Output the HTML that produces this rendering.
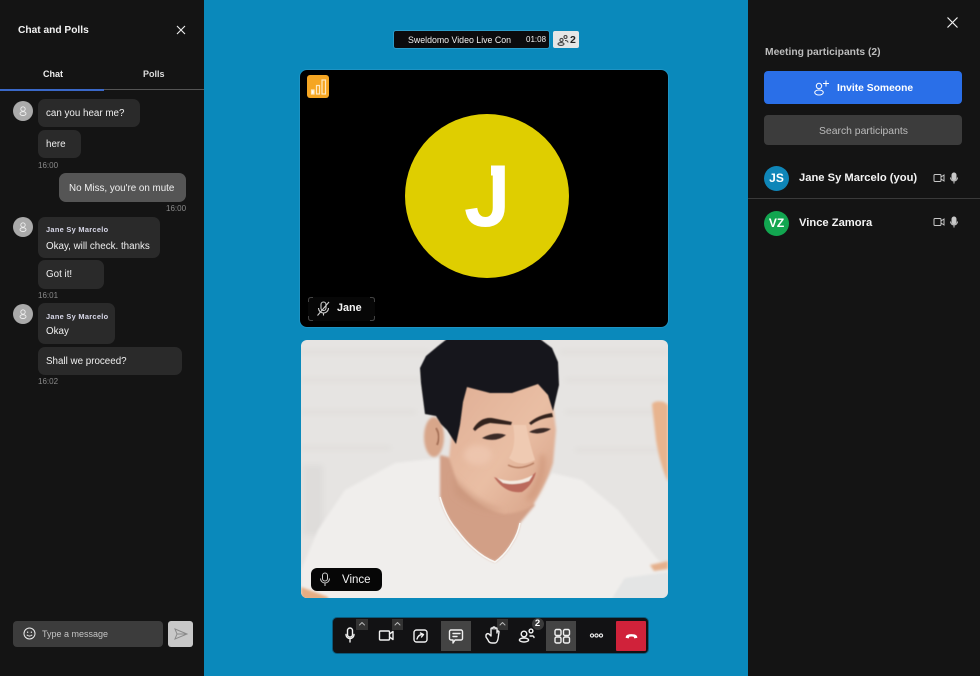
<!DOCTYPE html>
<html><head><meta charset="utf-8">
<style>
*{box-sizing:border-box}
html,body{margin:0;padding:0}
body{width:980px;height:676px;position:relative;overflow:hidden;background:#0a89bb;font-family:"Liberation Sans",sans-serif;color:#fff}
.a{position:absolute}
.t{position:absolute;white-space:nowrap;line-height:14px}
.b{position:absolute;background:#2a2a2a;border-radius:7px}
.tm{position:absolute;font-size:8px;color:#8a8a8a;line-height:10px}
.av{position:absolute;left:13px;width:20px;height:20px;border-radius:50%;background:#aaa}
svg{position:absolute;overflow:visible}
.m{font-size:9.8px;color:#f0f0f0}
.n{font-size:7.4px;font-weight:bold;color:#d8d8e8;letter-spacing:.3px}
</style></head>
<body>
<!-- left panel -->
<div class="a" style="left:0;top:0;width:204px;height:676px;background:#141414"></div>
<div class="t" style="left:18px;top:24px;font-size:10.2px;font-weight:bold;color:#f2f2f2">Chat and Polls</div>
<svg style="left:176px;top:25px" width="10" height="10" fill="none" stroke="#eee" stroke-width="1.1"><path d="M1 1l8 8M9 1l-8 8"/></svg>
<div class="t" style="left:43px;top:67px;font-size:9px;font-weight:bold;color:#eee">Chat</div>
<div class="t" style="left:143px;top:67px;font-size:9px;font-weight:bold;color:#ddd">Polls</div>
<div class="a" style="left:0;top:89px;width:204px;height:1px;background:#555"></div>
<div class="a" style="left:0;top:89px;width:104px;height:1.5px;background:#3a68c8"></div>

<div class="av" style="top:101px"></div>
<svg style="left:13px;top:101px" width="20" height="20" fill="none" stroke="#eee" stroke-width=".9"><circle cx="10" cy="8" r="2.2"/><ellipse cx="10" cy="12.6" rx="3" ry="1.9"/></svg>
<div class="b" style="left:38px;top:99px;width:102px;height:28px"></div>
<div class="t m" style="left:46px;top:107px">can you hear me?</div>
<div class="b" style="left:38px;top:130px;width:43px;height:28px"></div>
<div class="t m" style="left:46px;top:138px">here</div>
<div class="tm" style="left:38px;top:161px">16:00</div>
<div class="b" style="left:59px;top:173px;width:127px;height:29px;background:#555"></div>
<div class="t m" style="left:69px;top:182px">No Miss, you're on mute</div>
<div class="tm" style="left:166px;top:204px">16:00</div>

<div class="av" style="top:217px"></div>
<svg style="left:13px;top:217px" width="20" height="20" fill="none" stroke="#eee" stroke-width=".9"><circle cx="10" cy="8" r="2.2"/><ellipse cx="10" cy="12.6" rx="3" ry="1.9"/></svg>
<div class="b" style="left:38px;top:217px;width:122px;height:41px"></div>
<div class="t n" style="left:46px;top:223px">Jane Sy Marcelo</div>
<div class="t m" style="left:46px;top:240px">Okay, will check. thanks</div>
<div class="b" style="left:38px;top:260px;width:66px;height:29px"></div>
<div class="t m" style="left:46px;top:268px">Got it!</div>
<div class="tm" style="left:38px;top:291px">16:01</div>

<div class="av" style="top:304px"></div>
<svg style="left:13px;top:304px" width="20" height="20" fill="none" stroke="#eee" stroke-width=".9"><circle cx="10" cy="8" r="2.2"/><ellipse cx="10" cy="12.6" rx="3" ry="1.9"/></svg>
<div class="b" style="left:38px;top:303px;width:77px;height:41px"></div>
<div class="t n" style="left:46px;top:310px">Jane Sy Marcelo</div>
<div class="t m" style="left:46px;top:325px">Okay</div>
<div class="b" style="left:38px;top:347px;width:144px;height:28px"></div>
<div class="t m" style="left:46px;top:355px">Shall we proceed?</div>
<div class="tm" style="left:38px;top:377px">16:02</div>

<div class="a" style="left:13px;top:621px;width:150px;height:26px;background:#3c3c3c;border-radius:4px"></div>
<svg style="left:23px;top:627px" width="13" height="13" fill="none" stroke="#eee" stroke-width="1"><circle cx="6.5" cy="6.5" r="5.5"/><circle cx="4.6" cy="5.2" r=".7" fill="#eee" stroke="none"/><circle cx="8.4" cy="5.2" r=".7" fill="#eee" stroke="none"/><path d="M3.8 7.8q2.7 2.6 5.4 0"/></svg>
<div class="t" style="left:42px;top:627px;font-size:9px;color:#c4c4c4">Type a message</div>
<div class="a" style="left:168px;top:621px;width:25px;height:26px;background:#c8c8c8;border-radius:3px"></div>
<svg style="left:174px;top:628px" width="14" height="12" fill="none" stroke="#8a8a8a" stroke-width="1"><path d="M1 1l12 5-12 5 2-5zM3 6h10"/></svg>

<!-- right panel -->
<div class="a" style="left:748px;top:0;width:232px;height:676px;background:#141414"></div>
<svg style="left:947px;top:17px" width="11" height="11" fill="none" stroke="#f2f2f2" stroke-width="1.2"><path d="M.5.5l10 10M10.5.5l-10 10"/></svg>
<div class="t" style="left:765px;top:46px;font-size:10.3px;font-weight:bold;color:#bdbdbd">Meeting participants (2)</div>
<div class="a" style="left:764px;top:71px;width:198px;height:33px;background:#2a6fe8;border-radius:4px"></div>
<svg style="left:813px;top:79px" width="18" height="17" fill="none" stroke="#fff" stroke-width="1"><circle cx="6" cy="7" r="2.7"/><ellipse cx="6" cy="13.5" rx="4.3" ry="2.5"/><path d="M13 1.500v6M10 4.500h6"/></svg>
<div class="t" style="left:837px;top:82px;font-size:10.3px;font-weight:bold;color:#fff">Invite Someone</div>
<div class="a" style="left:764px;top:115px;width:198px;height:30px;background:#3c3c3c;border-radius:4px"></div>
<div class="t" style="left:819px;top:125px;font-size:10.4px;color:#bcbcbc">Search participants</div>

<div class="a" style="left:764px;top:166px;width:25px;height:25px;border-radius:50%;background:#0f86b8"></div>
<div class="t" style="left:764px;top:171px;width:25px;text-align:center;font-size:12px;font-weight:bold">JS</div>
<div class="t" style="left:799px;top:171px;font-size:11.2px;font-weight:bold;color:#f4f4f4">Jane Sy Marcelo (you)</div>
<div class="a" style="left:748px;top:198px;width:232px;height:1px;background:#3a3a3a"></div>
<div class="a" style="left:764px;top:211px;width:25px;height:25px;border-radius:50%;background:#12a650"></div>
<div class="t" style="left:764px;top:216px;width:25px;text-align:center;font-size:12px;font-weight:bold">VZ</div>
<div class="t" style="left:799px;top:216px;font-size:11.2px;font-weight:bold;color:#f4f4f4">Vince Zamora</div>
<svg style="left:933px;top:172px" width="28" height="12" fill="none" stroke="#c8c8c8" stroke-width="1"><rect x="1" y="2.5" width="7" height="7" rx="1"/><path d="M8 5l3-2v6l-3-2"/><rect x="19" y="1" width="4" height="7" rx="2" fill="#c8c8c8"/><path d="M17.500 5.500a3.500 3.500 0 0 0 7 0M21 9v2.500"/></svg>
<svg style="left:933px;top:216px" width="28" height="12" fill="none" stroke="#c8c8c8" stroke-width="1"><rect x="1" y="2.5" width="7" height="7" rx="1"/><path d="M8 5l3-2v6l-3-2"/><rect x="19" y="1" width="4" height="7" rx="2" fill="#c8c8c8"/><path d="M17.500 5.500a3.500 3.500 0 0 0 7 0M21 9v2.500"/></svg>

<!-- top bar -->
<div class="a" style="left:393px;top:30px;width:157px;height:19px;background:#0b0b0d;border-radius:3px;border:1px solid #2a9dcb"></div>
<div class="t" style="left:408px;top:33px;font-size:8.8px;color:#f2f2f2">Sweldomo Video Live Con</div>
<div class="t" style="left:526px;top:33px;font-size:8px;color:#f2f2f2">01:08</div>
<div class="a" style="left:553px;top:31px;width:26px;height:17px;background:#e6e6e6;border-radius:2px"></div>
<svg style="left:557px;top:34px" width="12" height="12" fill="none" stroke="#444" stroke-width="1.1"><circle cx="4.5" cy="6" r="1.6"/><ellipse cx="4" cy="10" rx="3" ry="1.4"/><circle cx="8.500" cy="3" r="1.5"/><path d="M8 6.500c2 0 3 1 3 2"/></svg>
<div class="t" style="left:570px;top:32.500px;font-size:10.5px;font-weight:bold;color:#222">2</div>

<!-- video 1 -->
<div class="a" style="left:299px;top:69px;width:370px;height:259px;background:#000;border-radius:8px;border:1px solid #1d93c4"></div>
<div class="a" style="left:306.500px;top:75px;width:22px;height:22.500px;background:#f5a623;border-radius:3px"></div>
<svg style="left:306px;top:75px" width="23" height="23" fill="none" stroke="#ffe8bf" stroke-width="1.200"><rect x="5.500" y="15" width="2.500" height="4" fill="#fff"/><rect x="10.500" y="10.500" width="3" height="8.500"/><rect x="16" y="5" width="3.500" height="14"/></svg>
<div class="a" style="left:405px;top:114px;width:164px;height:164px;border-radius:50%;background:#dfce00"></div>
<div class="t" style="left:464px;top:146px;line-height:100px;font-size:88px;font-weight:bold;color:#fff;transform:scaleX(.95);transform-origin:0 0">J</div>
<div class="a" style="left:455px;top:150px;width:36px;height:49px;background:#dfce00"></div>
<div class="a" style="left:308px;top:297px;width:67px;height:24px;border-radius:4px;background:#070707"></div>
<svg style="left:308px;top:297px" width="67" height="24" fill="none" stroke="#444" stroke-width="1"><path d="M.5 5V3Q.5.500 3 .500H5M62 .500h2Q66.500.500 66.500 3V5M66.500 19v2Q66.500 23.500 64 23.500H62M5 23.500H3Q.500 23.500.500 21V19"/></svg>
<svg style="left:316px;top:301px" width="14" height="15" fill="none" stroke="#cfcfcf" stroke-width="1.100"><rect x="5" y="1" width="5" height="8.500" rx="2.500"/><path d="M2.500 7a5 5 0 0 0 10 0M7.500 12v2.500M1.500 14.500L13 1"/></svg>
<div class="t" style="left:337px;top:301px;font-size:10.8px;font-weight:bold;color:#f5f5f5">Jane</div>

<!-- video 2 -->
<svg style="left:301px;top:340px" width="367" height="258" viewBox="301 340 367 258">
<defs>
<clipPath id="c"><rect x="301" y="340" width="367" height="258" rx="6"/></clipPath>
<filter id="f1" x="-20%" y="-20%" width="140%" height="140%"><feGaussianBlur stdDeviation="1.2"/></filter>
<filter id="f2" x="-20%" y="-20%" width="140%" height="140%"><feGaussianBlur stdDeviation="3"/></filter>
<filter id="f3" x="-20%" y="-20%" width="140%" height="140%"><feGaussianBlur stdDeviation=".6"/></filter>
<linearGradient id="skin" x1="0" y1="0" x2="1" y2="1"><stop offset="0" stop-color="#dfae94"/><stop offset=".55" stop-color="#e9bea4"/><stop offset="1" stop-color="#d59f84"/></linearGradient>
</defs>
<g clip-path="url(#c)">
<rect x="301" y="340" width="367" height="258" fill="#e6e4e2"/>
<g filter="url(#f2)">
<path d="M301 380h120M301 412h115M301 448h90M565 380h103M565 412h103M575 450h93M300 352h130M560 352h108" stroke="#dedbd8" stroke-width="3" fill="none"/>
<rect x="303" y="465" width="20" height="70" fill="#dedcda"/>
</g>
<!-- shirt -->
<path filter="url(#f1)" d="M301 570L318 530L345 490L395 463L440 458L470 500L525 505L552 473L582 480L618 510L658 560L668 566L668 575L625 580L612 600H305L301 595Z" fill="#f0eeec"/>
<!-- neck -->
<path filter="url(#f1)" d="M440 455V497Q446 518 457 530Q465 541 473 548Q484 558 495 562Q505 555 512 543Q518 534 520 523L535 505L480 465Z" fill="#d29f86"/>
<path d="M440 497Q446 518 457 530Q465 541 473 548Q484 558 495 562Q505 555 512 543Q518 534 520 523" fill="none" stroke="#f8f6f3" stroke-width="1.500"/>
<!-- ear -->
<ellipse filter="url(#f1)" cx="434" cy="437" rx="10" ry="20" fill="#d8a68a"/>
<path filter="url(#f3)" d="M436 428q5 8 1 17" stroke="#a8735a" stroke-width="2" fill="none"/>
<!-- face -->
<path filter="url(#f1)" d="M458 395L452 430L449 458L458 485Q480 510 505 514Q525 512 533 505Q548 480 553 463L556 430L552 395L535 375L470 375Z" fill="url(#skin)"/>
<g filter="url(#f2)">
<path d="M452 475Q480 505 505 510Q480 515 455 495Z" fill="#c9947a" opacity=".6"/>
<ellipse cx="478" cy="455" rx="14" ry="10" fill="#edc5ad"/>
<path d="M545 455Q548 480 532 500L525 500Q540 480 540 455Z" fill="#d39c80"/>
</g>
<!-- hair -->
<path filter="url(#f3)" d="M421 383L420 368L426 356L438 346L447 339H540L552 348L558 362L559 385L553 411L548 395L538 384L512 393L490 393L467 387L463 402L460 425L456 444L447 430L441 424L436 416L425 414Z" fill="#16161a"/>
<g filter="url(#f3)">
<path d="M473 429Q480 417 492 418L512 422L511 425L490 423Q481 425 475 431Z" fill="#33231f"/>
<path d="M529 423Q538 415 552 413L553 417Q540 418 531 425Z" fill="#33231f"/>
<path d="M482 438Q495 431 506 435Q496 443 482 438Z" fill="#3a2a28"/>
<path d="M529 432Q540 426 551 429Q540 436 529 432Z" fill="#3a2a28"/>
<path d="M513 425Q517 445 509 458Q520 468 535 460Q530 445 526 425Z" fill="#efcab2"/>
<path d="M494 477Q505 482 516 482Q528 480 536 472Q533 485 522 492Q505 494 494 477Z" fill="#bb6a5c"/>
<path d="M497 478Q515 485 533 475L529 481Q515 486 503 483Z" fill="#f4eae0"/>
<path d="M508 465q12 6 26 -2" stroke="#b67e62" stroke-width="1.500" fill="none"/>
</g>
<!-- right hand, arm, laptop -->
<g filter="url(#f1)">
<path d="M652 404Q655 400 664 402L668 405V482Q660 465 656 440Z" fill="#e8b48e"/>
<path d="M301 587L328 597V600H301Z" fill="#e5ad83"/>
<path d="M650 565l18-4v8l-14 2z" fill="#e5b08c"/>
<path d="M625 578l43-6v26h-55z" fill="#e4e5e5"/>
</g>
</g>
</svg>
<div class="a" style="left:311px;top:568px;width:71px;height:23px;background:#060606;border-radius:6px"></div>
<svg style="left:319px;top:572px" width="12" height="15" fill="none" stroke="#cfcfcf" stroke-width="1"><rect x="3.5" y="1" width="5" height="8" rx="2.5"/><path d="M1.500 6.500a4.500 4.500 0 0 0 9 0M6 11v3"/></svg>
<div class="t" style="left:342px;top:573px;font-size:11.5px;color:#f2f2f2">Vince</div>

<!-- toolbar -->
<div class="a" style="left:332px;top:617px;width:317px;height:37px;background:#121214;border-radius:5px;border:1px solid #0b5a7c"></div>
<div class="a" style="left:441px;top:621px;width:30px;height:30px;background:#444"></div>
<div class="a" style="left:546px;top:621px;width:30px;height:30px;background:#444"></div>
<div class="a" style="left:616px;top:621px;width:30px;height:30px;background:#d0223a;border-radius:1px"></div>
<div class="a" style="left:356px;top:619px;width:12px;height:11px;background:#333"></div>
<div class="a" style="left:392px;top:619px;width:11px;height:11px;background:#333"></div>
<div class="a" style="left:497px;top:619px;width:11px;height:11px;background:#333"></div>
<svg style="left:332px;top:610px" width="317" height="50" fill="none" stroke="#f0f0f0" stroke-width="1.400" stroke-linecap="round" stroke-linejoin="round">
<g stroke="#bbb" stroke-width=".9"><path d="M27.500 15l2.500-2.500 2.500 2.500M63 15l2.500-2.500 2.500 2.500M168 15l2.500-2.500 2.500 2.500"/></g>
<rect x="15.500" y="18" width="5" height="9" rx="2.5"/><path d="M14 24.500a4 4 0 0 0 8 0M18 29v3"/>
<rect x="47.500" y="21" width="10" height="9" rx="1"/><path d="M57.500 24l3.500-2.500v8l-3.500-2.500"/>
<rect x="82" y="20" width="13" height="12" rx="2.5"/><path d="M85 29q1-4 5-4.500M88.500 23l3 1.500-2 2.500"/>
<path d="M119 20h10a1.500 1.500 0 0 1 1.500 1.500v7a1.500 1.500 0 0 1-1.500 1.500h-6l-2 3v-3h-2a1.500 1.500 0 0 1-1.500-1.500v-7a1.500 1.500 0 0 1 1.500-1.500z"/><path d="M121 23.500h7M121 26.500h4"/>
<path d="M154 27l2 3q1 3 4 3h3q2 0 3-4l1-7q0-1-1-1-1 0-1 2v-4q0-1-1-1-1 0-1 1v-1q0-1-1-1-1 0-1 1v1q0-1-1-1-1 0-1 1v7l-2-2q-2-1-3 1z"/>
<circle cx="192" cy="24" r="2.800"/><ellipse cx="192" cy="30" rx="4.600" ry="2"/><circle cx="199" cy="21" r="1.900"/><path d="M198 26h3q1 .5 1 1.500"/>
<rect x="223" y="19.500" width="6" height="6" rx="1.5"/><rect x="231.500" y="19.500" width="6" height="6" rx="1.5"/><rect x="223" y="27" width="6" height="6" rx="1.5"/><rect x="231.500" y="27" width="6" height="6" rx="1.5"/>
<g stroke-width="1.100"><circle cx="260" cy="25.500" r="1.600"/><circle cx="264.500" cy="25.500" r="1.600"/><circle cx="269" cy="25.500" r="1.600"/></g>
<path d="M294 27.500q0-3 5.500-3t5.500 3l-2.500.5-.5-1.500q-2.500-.7-5 0l-.5 1.500z" fill="#fff" stroke="#fff" stroke-width=".7"/>
</svg>
<div class="a" style="left:531.500px;top:618px;width:12px;height:12px;border-radius:50%;background:#3a3a3a"></div>
<div class="t" style="left:531.500px;top:617px;width:12px;text-align:center;font-size:9.5px;font-weight:bold;color:#fff">2</div>
</body></html>
